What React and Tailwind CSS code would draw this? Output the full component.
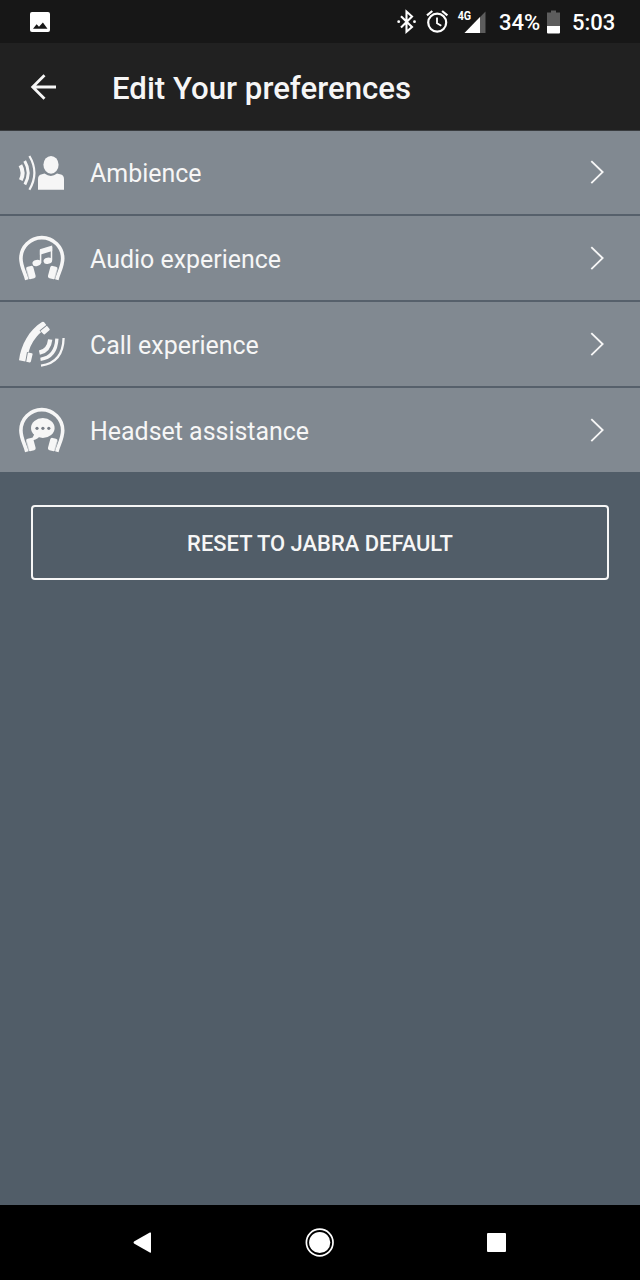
import React from "react";

function AmbienceIcon() {
  return (
    <svg className="h-[84px] w-12 shrink-0" viewBox="0 0 48 84" fill="none" stroke="#f6f6f6">
      <path d="M2.4 34.3Q6.6 41.7 2.8 49.2" strokeWidth="4" />
      <path d="M6.7 30Q13.6 41.7 6.9 53.4" strokeWidth="3" />
      <path d="M11.4 25Q21.4 41.7 11.4 58.8" strokeWidth="2.2" />
      <ellipse cx="33" cy="33.8" rx="7.6" ry="8.9" fill="#f6f6f6" stroke="none" />
      <path d="M20 58.7V48Q20 44 24 43.3L26.5 42.6Q33 47.3 39 42.6L42 43.3Q46 44 46 48V58.7Z" fill="#f6f6f6" stroke="none" />
    </svg>
  );
}

function Headphones() {
  return (
    <>
      <path d="M8.8 63.8C7 56.5 2.9 50.5 2.9 42.5A20.9 20.9 0 0 1 44.7 42.5C44.7 50.5 40.6 56.5 38.8 63.8" stroke="#f6f6f6" strokeWidth="3.6" fill="none" />
      <rect x="-3.7" y="-6.4" width="7.4" height="12.8" rx="2" transform="translate(12.9 56.5) rotate(-15)" fill="#f6f6f6" />
      <rect x="-3.7" y="-6.4" width="7.4" height="12.8" rx="2" transform="translate(34.7 56.5) rotate(15)" fill="#f6f6f6" />
      <path d="M8.5 53.5L11 62.5M39.1 53.5L36.6 62.5" stroke="#b9bec3" strokeWidth="0.6" />
    </>
  );
}

function AudioIcon() {
  return (
    <svg className="h-[84px] w-12 shrink-0" viewBox="0 0 48 84" fill="none">
      <Headphones />
      <path d="M21.9 33.3L34.2 29.6V35L21.9 38.7Z" fill="#f6f6f6" />
      <path d="M22.6 34V47M33.5 31V44.5" stroke="#f6f6f6" strokeWidth="1.5" />
      <ellipse cx="18.7" cy="47" rx="4.3" ry="3.1" transform="rotate(-12 18.7 47)" fill="#f6f6f6" />
      <ellipse cx="29.8" cy="44.8" rx="4.3" ry="3.1" transform="rotate(-12 29.8 44.8)" fill="#f6f6f6" />
    </svg>
  );
}

function CallIcon() {
  return (
    <svg className="h-[84px] w-12 shrink-0" viewBox="0 0 48 84" fill="none" stroke="#f6f6f6">
      <path d="M1 58.2C3 43 11 28 24 20Q25.3 19.2 26.2 20.3L28.3 23L21.5 28.5L23 30.2C17 35.5 12.6 42.5 10.6 50.2L9 50L7.3 59.6Z" fill="#f6f6f6" stroke="none" />
      <path d="M28.9 23.8L31.6 27Q32 27.7 31.4 28.2L26.8 32.2Q26 32.7 25.4 32L22.4 28.9Z" fill="#f6f6f6" stroke="none" />
      <path d="M9.9 50.4L14 51.3Q14.8 51.6 14.6 52.3L12.9 59.6Q12.6 60.6 11.7 60.4L8.2 59.7Z" fill="#f6f6f6" stroke="none" />
      <path d="M32.2 37.4Q31 48.5 21.4 50.7" strokeWidth="4.3" />
      <path d="M38.9 36.7Q38 55.2 22.5 57.3" strokeWidth="3.3" />
      <path d="M45.6 36Q45 60.7 23 63.6" strokeWidth="2.3" />
    </svg>
  );
}

function AssistanceIcon() {
  return (
    <svg className="h-[84px] w-12 shrink-0" viewBox="0 0 48 84" fill="none">
      <Headphones />
      <ellipse cx="24.8" cy="40" rx="11.8" ry="10" fill="#f6f6f6" />
      <path d="M16.5 44.5Q16 49.5 11 52.5Q17.5 53 21.8 48.2Z" fill="#f6f6f6" />
      <g fill="#777d86">
        <circle cx="19" cy="40.3" r="1.6" />
        <circle cx="24.9" cy="40.3" r="1.6" />
        <circle cx="30.8" cy="40.3" r="1.6" />
      </g>
    </svg>
  );
}

const items = [
  { label: "Ambience", Icon: AmbienceIcon, row: "h-[85px]" },
  { label: "Audio experience", Icon: AudioIcon, row: "h-[86px]" },
  { label: "Call experience", Icon: CallIcon, row: "h-[86px]" },
  { label: "Headset assistance", Icon: AssistanceIcon, row: "h-[84px]" },
];

function StatusBar() {
  return (
    <header className="flex h-[43px] shrink-0 items-center bg-[#171717] pr-[26px] pl-[30px] text-white">
      <svg className="size-5" viewBox="0 0 20 20">
        <rect width="20" height="20" rx="2" fill="#fff" />
        <path d="M3 16.7L6.6 12.2L9 14.8L12.9 10.5L17.5 16.7Z" fill="#171717" />
      </svg>
      <svg className="ml-auto h-[43px] w-[90px]" viewBox="396 0 90 43" fill="none" stroke="#fff">
        <path d="M401 16.2L412 27L406.5 31.8V11.5L412 16.5L401 27.5" strokeWidth="2.1" />
        <circle cx="398.7" cy="21.7" r="1.4" fill="#fff" stroke="none" />
        <circle cx="414.5" cy="21.7" r="1.4" fill="#fff" stroke="none" />
        <circle cx="437.2" cy="22.6" r="9" strokeWidth="2.2" />
        <path d="M437 17.5V23.2L441.3 25.8" strokeWidth="1.8" />
        <path d="M427 15.3L432.3 11M447.4 15.3L442.1 11" strokeWidth="2.2" />
        <text x="457.7" y="20.3" fill="#fff" stroke="none" fontFamily="Roboto, sans-serif" fontSize="12.5" fontWeight="700" textLength="13.5" lengthAdjust="spacingAndGlyphs">4G</text>
        <path d="M464.5 33L485.5 11.5V33Z" fill="#5d5d5d" stroke="none" />
        <path d="M464.5 33L480 17.1V33Z" fill="#fff" stroke="none" />
      </svg>
      <span className="ml-[13px] w-10 pt-[2px] text-[22px] leading-none font-medium whitespace-nowrap">34%</span>
      <svg className="ml-[8px] h-6 w-[13px]" viewBox="0 0 13 24">
        <path d="M4 0.5H9V2.5H13V16H0V2.5H4Z" fill="#5d5d5d" />
        <path d="M0 16H13V22.5Q13 23.5 12 23.5H1Q0 23.5 0 22.5Z" fill="#fff" />
      </svg>
      <span className="ml-[12px] w-[42px] pt-[2px] text-[22px] leading-none font-medium whitespace-nowrap">5:03</span>
    </header>
  );
}

export default function App() {
  return (
    <div className="flex h-[1280px] w-[640px] flex-col overflow-hidden bg-[#515d68] font-[Roboto,sans-serif] text-[#f6f6f6]">
      <StatusBar />
      <div className="flex h-[88px] shrink-0 items-center border-b border-[#393c3f] bg-[#212121] pl-[30px]">
        <svg className="h-7 w-[27px]" viewBox="0 0 27 28" fill="none" stroke="#f6f6f6" strokeWidth="2.8">
          <path d="M26 14H3M14.5 2.2L2.7 14L14.5 25.8" />
        </svg>
        <h1 className="ml-[55px] pt-[5px] text-[31.2px] leading-none font-medium whitespace-nowrap">Edit Your preferences</h1>
      </div>
      <ul className="flex shrink-0 flex-col">
        {items.map(({ label, Icon, row }) => (
          <li key={label} className={`${row} flex items-center border-b-2 border-[#56606b] bg-[#818991] pr-9 pl-[18px] last:border-b-0`}>
            <Icon />
            <span className="ml-6 pt-[4px] text-[24.95px] leading-none whitespace-nowrap">{label}</span>
            <svg className="mb-px ml-auto h-6 w-[14px]" viewBox="0 0 14 24" fill="none" stroke="#f6f6f6" strokeWidth="1.9">
              <path d="M1.3 1.1L12.6 12.1L1.3 23.1" />
            </svg>
          </li>
        ))}
      </ul>
      <button className="mx-[31px] mt-[33px] h-[75px] shrink-0 rounded-[4px] border-2 border-[#f6f6f6] pt-[2px] text-[21.95px] leading-none font-medium whitespace-nowrap">
        RESET TO JABRA DEFAULT
      </button>
      <nav className="mt-auto flex h-[75px] shrink-0 items-center bg-black pr-[134px] pl-[133px]">
        <svg className="h-[21px] w-[19px]" viewBox="0 0 19 21" fill="#fff">
          <path d="M1 9.6L16.8 0.6Q18 0 18 1V20Q18 21 16.8 20.4L1 11.4Q0 10.5 1 9.6Z" />
        </svg>
        <svg className="mx-auto size-[30px]" viewBox="0 0 30 30">
          <circle cx="14.7" cy="14.5" r="13.3" fill="none" stroke="#fff" strokeWidth="1.7" />
          <circle cx="14.7" cy="14.5" r="10.6" fill="#fff" />
        </svg>
        <div className="size-[19px] rounded-[1px] bg-white" />
      </nav>
    </div>
  );
}
